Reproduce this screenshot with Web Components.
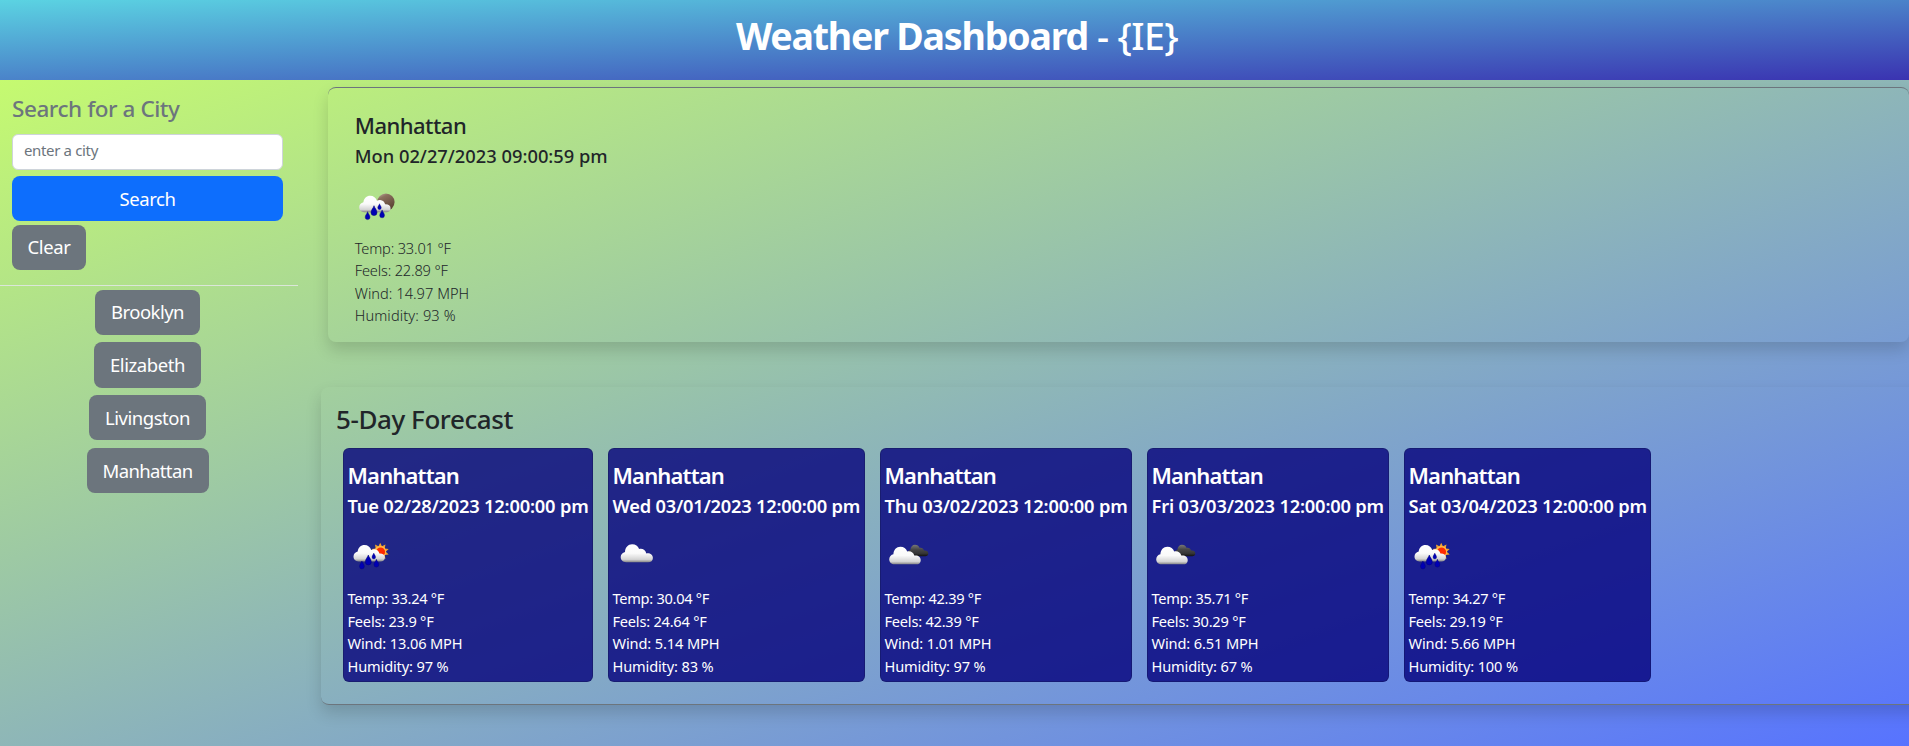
<!DOCTYPE html>
<html lang="en">
<head>
<meta charset="utf-8">
<title>Weather Dashboard</title>
<style>
html,body{margin:0;height:100%;overflow:hidden}
body{font-family:"Noto Sans","Open Sans",sans-serif;color:#212529;font-size:15px}
</style>
</head>
<body>
<weather-app></weather-app>
<script>
const define=(name,html,init)=>customElements.define(name,class extends HTMLElement{
  connectedCallback(){
    if(this.shadowRoot)return;
    const t=document.createElement('template');
    t.innerHTML=typeof html==='function'?html(this):html;
    this.attachShadow({mode:'open'}).appendChild(t.content.cloneNode(true));
    if(init)init(this);
  }
});

/* Text tracked so that its run takes the given width. */
define('fit-text','<style>:host{display:inline-block;white-space:nowrap}</style><span><slot></slot></span>',el=>{
  const w=parseFloat(el.getAttribute('w')),n=el.textContent.length;
  const now=el.getBoundingClientRect().width;
  if(now)el.style.letterSpacing=((w-now)/n).toFixed(4)+'px';
});

const CLOUD='M5.4 18C2.4 18 0 16 0 12.8 0 10 2 8.1 4.3 7.6 4.5 3.2 7.4 0 11.4 0c3.5 0 5.9 1.9 7 4.8 3-1 6.6.8 7.2 4.3 3.6-.7 6.6 1.4 6.6 4.6 0 2.800-2 4.300-4.800 4.300z';
const drop=(x,y,s)=>`<path transform="translate(${x} ${y}) scale(${s})" d="M0-5C.7-2.500 3-.8 3 1.900A3 3 0 0 1-3 1.900C-3-.8-.7-2.500 0-5Z" fill="#0000b4" stroke="#000078" stroke-width=".5"/>`;
const drops=(x,y)=>drop(x+14.8,y+15,1)+drop(x+8.4,y+20,.8)+drop(x+22.9,y+18.200,.8)+drop(x+20.3,y+11,.6);
const cloud=(x,y,f='url(#c)',s=1)=>`<path transform="translate(${x} ${y}) scale(${s})" d="${CLOUD}" fill="${f}"/>`;
/* Rain clouds: a tall lump on the left and a smaller one on the right. */
const rain=(x,y)=>`<path transform="translate(${x} ${y})" d="M5 16.500C2 16.500 0 14.300 0 11.600 0 9 1.800 7 4.200 6.500 4.700 2.600 7.400 0 11 0c3.300 0 5.900 2 6.700 5.100 1-.7 2.100-1 3.300-.9 2.500.1 4.500 1.900 4.900 4.400 3.100-.2 5.500 1.300 5.500 3.900 0 2.400-1.900 4-4.400 4z" fill="url(#c)"/>`;
const sun=(()=>{let p='';for(let i=0;i<20;i++){const a=i*Math.PI/10-Math.PI/2,r=i%2?5.6:8.900;p+=(i?'L':'M')+(32.2+r*Math.cos(a)).toFixed(2)+' '+(21.700+r*Math.sin(a)).toFixed(2)}
  return `<path d="${p}Z" fill="#f0a030"/><circle cx="32.2" cy="21.700" r="5.800" fill="#ffbe4a"/><circle cx="32.600" cy="21.900" r="4.500" fill="#ff2b00"/>`})();
const ART={
  day:sun+rain(5.500,15)+drops(5.500,15),
  night:'<circle cx="30.900" cy="22.100" r="8.700" fill="url(#m)"/>'+rain(4.200,15.700)+drops(4.200,15.700),
  cloud:cloud(7.700,14.300),
  broken:cloud(22.700,14.800,'url(#d)',.64)+cloud(4.200,16.700,'url(#c)',.98)
};
define('weather-icon',el=>`<style>:host{display:block;width:50px;height:50px}svg{display:block}</style>
<svg width="50" height="50" viewBox="0 0 50 50"><defs>
<linearGradient id="c" x1="0" y1="0" x2="0" y2="1"><stop offset="0" stop-color="#fff"/><stop offset=".5" stop-color="#fafafa"/><stop offset=".84" stop-color="#d4d4d4"/><stop offset="1" stop-color="#848484"/></linearGradient>
<linearGradient id="d" x1="0" y1="0" x2="0" y2="1"><stop offset="0" stop-color="#777"/><stop offset=".4" stop-color="#484848"/><stop offset=".75" stop-color="#353535"/><stop offset="1" stop-color="#101010"/></linearGradient>
<linearGradient id="m" x1="0" y1="0" x2=".5" y2="1"><stop offset="0" stop-color="#c5b4a6"/><stop offset=".3" stop-color="#8b705e"/><stop offset="1" stop-color="#5b4334"/></linearGradient>
</defs>${ART[el.getAttribute('kind')]}</svg>`);

define('app-header',`<style>:host{display:block;height:80px;box-sizing:border-box;padding:8px 0 0 5px;background:linear-gradient(to bottom right,#5bd3e2,#3a33b1);color:#fff;text-align:center}
h1{margin:0;font-size:37.5px;line-height:56px;font-weight:500}b{font-weight:700}</style>
<h1><fit-text w="352"><b>Weather Dashboard</b></fit-text><fit-text w="90" style="white-space:pre"> - {IE}</fit-text></h1>`);

define('app-button',el=>`<style>:host{display:block}
button{display:block;box-sizing:border-box;width:100%;height:45.300px;padding:0;border:0;border-radius:8px;background:var(--bg,#6c757d);color:#fff;font:400 18.500px/44px "Noto Sans","Open Sans",sans-serif}</style>
<button type="button"><fit-text w="${el.getAttribute('w')}">${el.getAttribute('label')}</fit-text></button>`);

define('city-search',`<style>:host{display:block;width:298px;flex:none}
form{padding:13px 15px 14px 12px;border-bottom:1px solid #dbe6d9;height:205.500px;box-sizing:border-box}
h4{margin:0;font-size:22.500px;line-height:32px;font-weight:500;color:#6c757d;height:40.500px}
.in{display:block;box-sizing:border-box;width:271px;height:36px;border:1px solid #ced4da;border-radius:6px;background:#fff;padding:0 11px;font-size:15px;line-height:31px;color:#6c757d}
.s{--bg:#0d6efd;margin-top:6.500px;width:271px}.c{width:74px;margin-top:3.500px}
.list{display:flex;flex-direction:column;align-items:center;gap:7.400px;padding:4.300px 3px 0 0}</style>
<form><h4><fit-text w="167.500">Search for a City</fit-text></h4>
<div class="in" role="textbox"><fit-text w="74">enter a city</fit-text></div>
<app-button class="s" label="Search" w="56"></app-button><app-button class="c" label="Clear" w="43"></app-button></form>
<div class="list">
<app-button style="width:105px" label="Brooklyn" w="73"></app-button>
<app-button style="width:107px" label="Elizabeth" w="75"></app-button>
<app-button style="width:117px" label="Livingston" w="85"></app-button>
<app-button style="width:122px" label="Manhattan" w="90"></app-button></div>`);

define('weather-report',el=>{
  const a=k=>el.getAttribute(k),w=a('widths').split(',');
  const row=(t,i)=>`<p><fit-text w="${w[i+1]}">${t}</fit-text></p>`;
  return `<style>:host{display:block;margin-left:var(--shift,-1.500px)}
h4,h5,p{margin:0}h4{font-size:22px;line-height:32px;font-weight:var(--hw,500)}h5{font-size:18.300px;line-height:30px;font-weight:var(--hw,500);margin-bottom:9px}
p{font-size:14.600px;line-height:var(--lh,22.600px);font-weight:var(--pw,400)}.rows{margin-top:7px}</style>
<h4><fit-text w="111.500">Manhattan</fit-text></h4><h5><fit-text w="${w[0]}">${a('date')}</fit-text></h5>
<weather-icon kind="${a('kind')}"></weather-icon>
<div class="rows">${[`Temp: ${a('temp')} °F`,`Feels: ${a('feels')} °F`,`Wind: ${a('wind')} MPH`,`Humidity: ${a('hum')} %`].map(row).join('')}</div>`});

define('current-weather',`<style>:host{display:block;box-sizing:border-box;height:255px;margin:7px 0 0 7px;border-top:1px solid #6c757d;border-radius:8px;padding:21px 27px;box-shadow:0 8px 16px rgba(0,0,0,.15);--pw:300;--lh:22.400px;--shift:-.3px}</style>
<weather-report date="Mon 02/27/2023 09:00:59 pm" kind="night" temp="33.01" feels="22.89" wind="14.97" hum="93" widths="253,96,93,114.500,101"></weather-report>`);

define('forecast-card','<style>:host{display:block;box-sizing:border-box;height:234px;padding:10px 5px 0;border:1px solid rgba(0,0,0,.176);border-radius:6px;background:rgba(4,0,124,.8);color:#fff;--hw:600}</style><slot></slot>');

const DAYS=[
 [250,'Tue 02/28/2023','day','33.24','23.9','13.06','97','241,96.500,86,115,101'],
 [257,'Wed 03/01/2023','cloud','30.04','24.64','5.14','83','247.500,96.500,94,107,101'],
 [252,'Thu 03/02/2023','broken','42.39','42.39','1.01','97','243,96.500,94,107,101'],
 [242,'Fri 03/03/2023','broken','35.71','30.29','6.51','67','232.500,96.500,94,107,101'],
 [247,'Sat 03/04/2023','day','34.27','29.19','5.66','100','238.500,96.500,94,107,109.500']];
define('five-day-forecast',`<style>:host{display:block;box-sizing:border-box;height:318px;width:1608px;margin-top:45px;border-bottom:1px solid #6c757d;border-radius:8px;padding:14px 15px;box-shadow:0 8px 16px rgba(0,0,0,.15)}
h3{margin:0;font-size:26px;line-height:36px;font-weight:500;height:47px}
.cards{display:flex;gap:15px;padding-left:7px}</style>
<h3><fit-text w="177">5-Day Forecast</fit-text></h3>
<div class="cards">${DAYS.map(d=>`<forecast-card style="width:${d[0]}px"><weather-report date="${d[1]} 12:00:00 pm" kind="${d[2]}" temp="${d[3]}" feels="${d[4]}" wind="${d[5]}" hum="${d[6]}" widths="${d[7]}"></weather-report></forecast-card>`).join('')}</div>`);

define('weather-app',`<style>:host{display:flex;flex-direction:column;height:100vh;overflow:hidden}
main{display:flex;flex:1;min-height:0;background:linear-gradient(to bottom right,#c5fa70,#5773ff)}
section{flex:1;min-width:0;margin-left:23px}</style>
<app-header></app-header><main><city-search></city-search><section><current-weather></current-weather><five-day-forecast></five-day-forecast></section></main>`);
</script>
</body>
</html>
